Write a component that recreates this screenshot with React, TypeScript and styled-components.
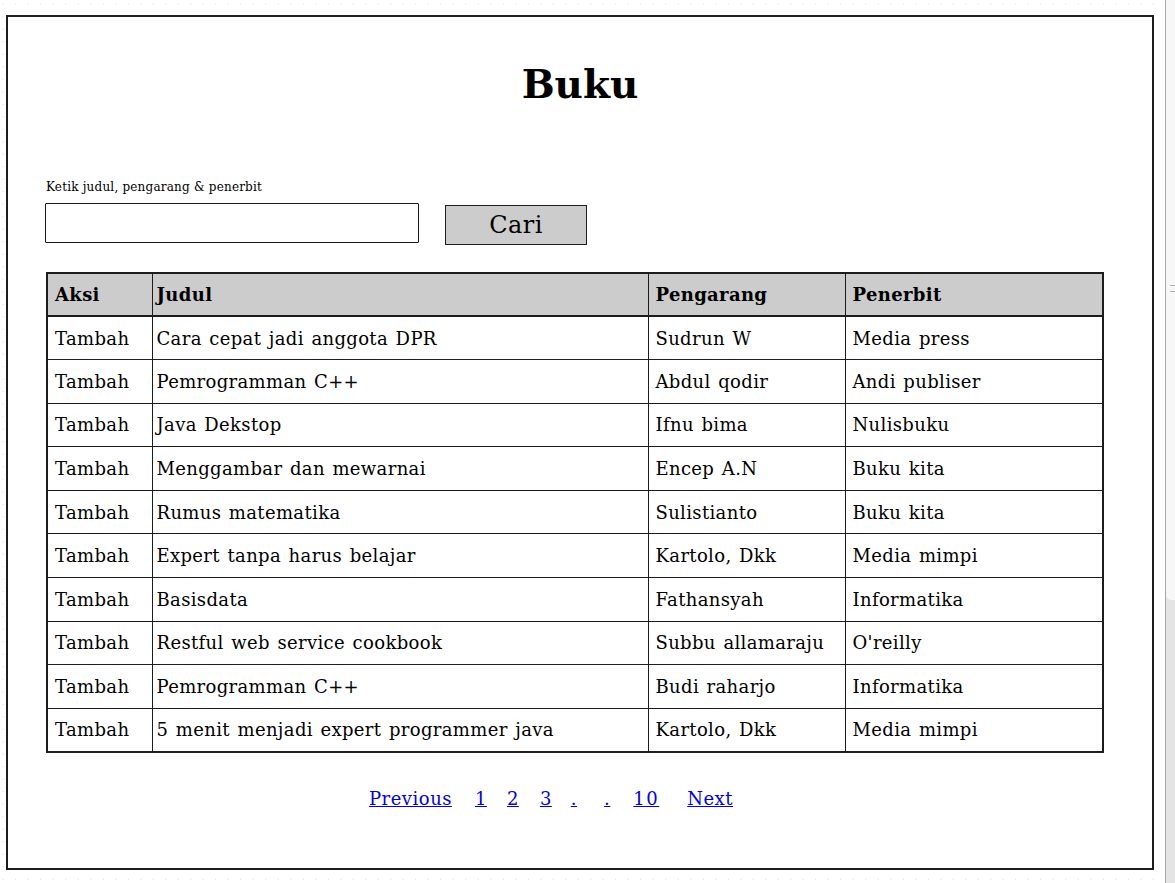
import styled, { createGlobalStyle } from "styled-components";

const GlobalStyle = createGlobalStyle`
  html, body {
    margin: 0;
    padding: 0;
    background: #fff;
  }
  body {
    font-family: "DejaVu Serif", "Liberation Serif", serif;
    color: #000;
  }
`;

const books = [
  { judul: "Cara cepat jadi anggota DPR", pengarang: "Sudrun W", penerbit: "Media press" },
  { judul: "Pemrogramman C++", pengarang: "Abdul qodir", penerbit: "Andi publiser" },
  { judul: "Java Dekstop", pengarang: "Ifnu bima", penerbit: "Nulisbuku" },
  { judul: "Menggambar dan mewarnai", pengarang: "Encep A.N", penerbit: "Buku kita" },
  { judul: "Rumus matematika", pengarang: "Sulistianto", penerbit: "Buku kita" },
  { judul: "Expert tanpa harus belajar", pengarang: "Kartolo, Dkk", penerbit: "Media mimpi" },
  { judul: "Basisdata", pengarang: "Fathansyah", penerbit: "Informatika" },
  { judul: "Restful web service cookbook", pengarang: "Subbu allamaraju", penerbit: "O'reilly" },
  { judul: "Pemrogramman C++", pengarang: "Budi raharjo", penerbit: "Informatika" },
  { judul: "5 menit menjadi expert programmer java", pengarang: "Kartolo, Dkk", penerbit: "Media mimpi" },
];

// spacing before each link, as laid out in the mockup
const pages = [
  { label: "Previous", space: 0 },
  { label: "1", space: 23 },
  { label: "2", space: 20 },
  { label: "3", space: 21 },
  { label: ".", space: 19 },
  { label: ".", space: 27 },
  { label: "10", space: 23 },
  { label: "Next", space: 28 },
];

const Screen = styled.div`
  display: flex;
  width: 1175px;
  height: 883px;
  overflow: hidden;
`;

const Canvas = styled.div`
  width: 1166px;
  height: 883px;
  box-sizing: border-box;
  padding: 15px 0 0 6px;
  background-color: #fff;
  background-image: radial-gradient(circle, #d4d4d4 0.6px, transparent 0.9px);
  background-size: 12.5px 12.5px;
  background-position: -3px -2px;
`;

const SidePanel = styled.div`
  width: 9px;
  height: 883px;
  border-left: 1px solid #a8a8a8;
  background: #e4e4e4;
  display: flex;
  flex-direction: column;
`;

const SideThumb = styled.div`
  height: 600px;
  background: #f7f7f7;
  border-bottom-left-radius: 5px;
  display: flex;
  align-items: flex-start;
  justify-content: flex-end;
`;

const Grip = styled.div`
  width: 5px;
  height: 5px;
  margin-top: 285px;
  border-top: 1px solid #b0b0b0;
  border-bottom: 1px solid #b0b0b0;
`;

const Frame = styled.div`
  width: 1148px;
  height: 855px;
  box-sizing: border-box;
  border: 2px solid #1c1c1c;
  background: #fff;
  padding: 43px 0 0 37px;
  display: flex;
  flex-direction: column;
`;

const Title = styled.h1`
  margin: 0 0 0 -37px;
  font-size: 39px;
  line-height: 48px;
  font-weight: bold;
  text-align: center;
`;

const SearchLabel = styled.div`
  margin-top: 72px;
  padding-left: 1px;
  font-size: 12px;
  letter-spacing: 0.2px;
  line-height: 14px;
`;

const SearchRow = styled.div`
  display: flex;
  align-items: flex-start;
  gap: 26px;
  margin-top: 9px;
`;

const SearchInput = styled.input`
  width: 374px;
  height: 40px;
  box-sizing: border-box;
  border: 1.6px solid #1c1c1c;
  border-radius: 1px;
  margin: 0;
  padding: 0 8px;
  font-family: inherit;
  font-size: 16px;
  outline: none;
`;

const SearchButton = styled.button`
  width: 142px;
  height: 40px;
  margin-top: 2px;
  box-sizing: border-box;
  border: 1px solid #1c1c1c;
  background: #cccccc;
  font-family: inherit;
  font-size: 24px;
  letter-spacing: 0.4px;
  color: #000;
  padding: 0;
  border-radius: 0;
`;

const Table = styled.table`
  margin-top: 27px;
  margin-left: 1px;
  width: 1056px;
  table-layout: fixed;
  border-collapse: collapse;
  border: 2px solid #1c1c1c;
  font-size: 18px;
  letter-spacing: 0.35px;
  word-spacing: 1.5px;
`;

const HeadCell = styled.th<{ $pad?: number }>`
  height: 43px;
  background: #cccccc;
  border: 1.5px solid #1c1c1c;
  border-bottom-width: 2px;
  text-align: left;
  font-weight: bold;
  padding: 0 0 0 ${(p) => p.$pad ?? 7}px;
  box-sizing: border-box;
`;

const Cell = styled.td<{ $pad?: number }>`
  height: 43.6px;
  border: 1.5px solid #1c1c1c;
  padding: 0 0 0 ${(p) => p.$pad ?? 7}px;
  white-space: nowrap;
  box-sizing: border-box;
`;

const Pagination = styled.nav`
  display: flex;
  align-items: center;
  margin-top: 35px;
  padding-left: 324px;
  font-size: 18px;
`;

const PageLink = styled.a<{ $space: number; $spread?: boolean }>`
  margin-left: ${(p) => p.$space}px;
  color: #0000ee;
  text-decoration: underline;
  letter-spacing: ${(p) => (p.$spread ? "1.5px" : "0.5px")};
  cursor: pointer;
`;

export default function App() {
  return (
    <>
      <GlobalStyle />
      <Screen>
        <Canvas>
          <Frame>
            <Title>Buku</Title>
            <SearchLabel>Ketik judul, pengarang &amp; penerbit</SearchLabel>
            <SearchRow>
              <SearchInput type="text" />
              <SearchButton type="button">Cari</SearchButton>
            </SearchRow>
            <Table>
              <colgroup>
                <col style={{ width: 105 }} />
                <col style={{ width: 496 }} />
                <col style={{ width: 197 }} />
                <col style={{ width: 258 }} />
              </colgroup>
              <thead>
                <tr>
                  <HeadCell>Aksi</HeadCell>
                  <HeadCell $pad={4}>Judul</HeadCell>
                  <HeadCell>Pengarang</HeadCell>
                  <HeadCell>Penerbit</HeadCell>
                </tr>
              </thead>
              <tbody>
                {books.map((b, i) => (
                  <tr key={i}>
                    <Cell>Tambah</Cell>
                    <Cell $pad={4}>{b.judul}</Cell>
                    <Cell>{b.pengarang}</Cell>
                    <Cell>{b.penerbit}</Cell>
                  </tr>
                ))}
              </tbody>
            </Table>
            <Pagination>
              {pages.map((p, i) => (
                <PageLink key={i} $space={p.space} $spread={p.label === "10"}>
                  {p.label}
                </PageLink>
              ))}
            </Pagination>
          </Frame>
        </Canvas>
        <SidePanel>
          <SideThumb>
            <Grip />
          </SideThumb>
        </SidePanel>
      </Screen>
    </>
  );
}
